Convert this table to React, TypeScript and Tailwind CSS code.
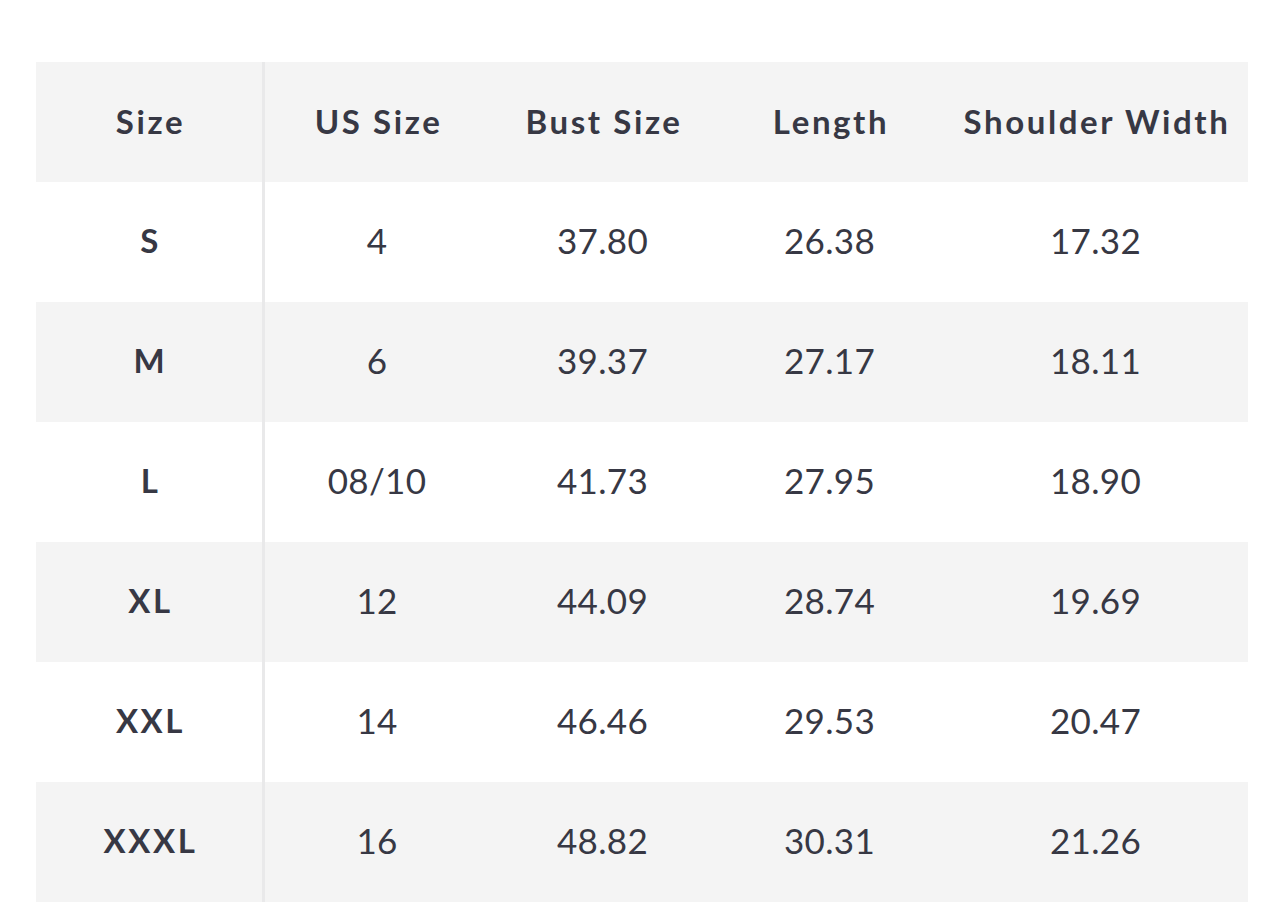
const headers = ["Size", "US Size", "Bust Size", "Length", "Shoulder Width"];

const rows = [
  ["S", "4", "37.80", "26.38", "17.32"],
  ["M", "6", "39.37", "27.17", "18.11"],
  ["L", "08/10", "41.73", "27.95", "18.90"],
  ["XL", "12", "44.09", "28.74", "19.69"],
  ["XXL", "14", "46.46", "29.53", "20.47"],
  ["XXXL", "16", "48.82", "30.31", "21.26"],
];

const cols = "grid grid-cols-[226px_227px_227px_227px_305px]";

export default function App() {
  return (
    <div className="min-h-[911px] bg-white pt-[62px] pl-[36px] text-[#373844] [font-family:Lato,'Open_Sans',sans-serif]">
      <div className="w-[1212px]">
        <div className={`${cols} h-[120px] bg-[#f4f4f4] text-[33px] font-bold tracking-[2.6px]`}>
          {headers.map((h, i) => (
            <div
              key={h}
              className={`flex items-center justify-center pl-[3px] ${i === 1 ? "border-l-[3px] border-[#e9e9ea]" : ""}`}
            >
              {h}
            </div>
          ))}
        </div>
        {rows.map((r, ri) => (
          <div
            key={r[0]}
            className={`${cols} h-[120px] text-[35px] tracking-[0.3px] ${ri % 2 === 1 ? "bg-[#f4f4f4]" : "bg-white"}`}
          >
            {r.map((c, i) => (
              <div
                key={i}
                className={`flex items-center justify-center pb-[3px] ${
                  i === 0 ? "font-bold text-[33px] tracking-[2.6px] pl-[3px]" : ""
                } ${i === 1 ? "border-l-[3px] border-[#e9e9ea]" : ""}`}
              >
                {c}
              </div>
            ))}
          </div>
        ))}
      </div>
    </div>
  );
}
